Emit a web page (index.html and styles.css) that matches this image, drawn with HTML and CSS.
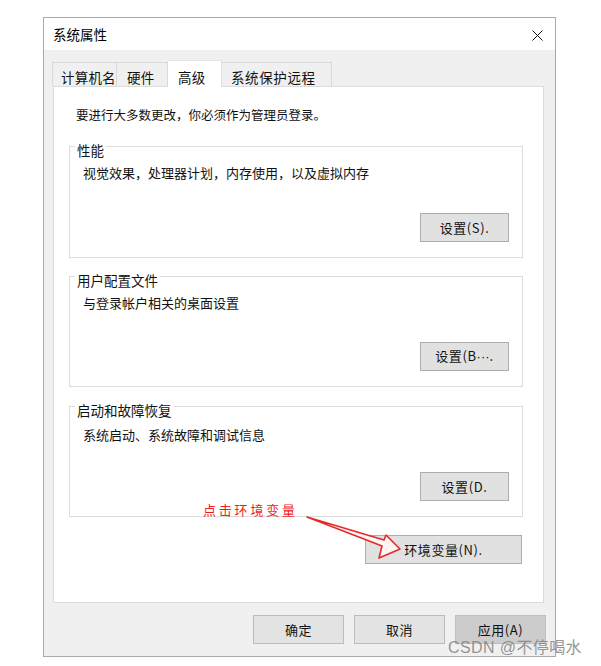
FILE: index.html
```html
<!DOCTYPE html>
<html lang="zh-CN">
<head>
<meta charset="utf-8">
<title>系统属性</title>
<link rel="stylesheet" href="styles.css">
</head>
<body>
<div class="stage">
  <div class="window">
    <div class="titlebar">
      <span class="title">系统属性</span>
      <span class="close">
        <svg width="11" height="11" viewBox="0 0 11 11"><path d="M0.5 0.5 L10.5 10.5 M10.5 0.5 L0.5 10.5" stroke="#111" stroke-width="1" fill="none"/></svg>
      </span>
    </div>
    <div class="body">
      <div class="tabs">
        <div class="tab t1">计算机名</div>
        <div class="tab t2">硬件</div>
        <div class="tab t3 active">高级</div>
        <div class="tab t4">系统保护远程</div>
      </div>
      <div class="panel">
        <p class="intro">要进行大多数更改，你必须作为管理员登录。</p>
        <section class="group g1">
          <div class="group-title">性能</div>
          <p class="group-desc">视觉效果，处理器计划，内存使用，以及虚拟内存</p>
          <div class="group-actions"><button class="btn btn-set">设置(S).</button></div>
        </section>
        <section class="group g2">
          <div class="group-title">用户配置文件</div>
          <p class="group-desc">与登录帐户相关的桌面设置</p>
          <div class="group-actions"><button class="btn btn-set">设置(B<span class="dots">···</span>.</button></div>
        </section>
        <section class="group g3">
          <div class="group-title">启动和故障恢复</div>
          <p class="group-desc">系统启动、系统故障和调试信息</p>
          <div class="group-actions"><button class="btn btn-set">设置(D.</button></div>
        </section>
        <div class="env-row"><button class="btn btn-env">环境变量(N).</button></div>
      </div>
      <div class="footer">
        <button class="btn btn-foot">确定</button>
        <button class="btn btn-foot">取消</button>
        <button class="btn btn-foot btn-apply">应用(A)</button>
      </div>
    </div>
  </div>
  <div class="annot">点击环境变量</div>
  <svg class="arrow" width="601" height="666" viewBox="0 0 601 666">
    <path d="M307 517 L384 540 L386 535 L400 549 L379 558 L382 546 Z" stroke="#e52a2a" stroke-width="1.6" fill="#fff4f4" stroke-linejoin="round"/>
  </svg>
  <div class="watermark">CSDN @不停喝水</div>
</div>
</body>
</html>
```

FILE: styles.css
```css
* { box-sizing: border-box; }

html, body {
  margin: 0;
  padding: 0;
  background: #ffffff;
}

body {
  font-family: "Noto Sans CJK SC", "Noto Sans", sans-serif;
  color: #111;
}

.stage {
  position: relative;
  width: 601px;
  height: 666px;
  padding: 17px 0 0 43px;
  overflow: hidden;
}

.window {
  width: 513px;
  height: 640px;
  border: 1px solid #a9a9a9;
  background: #f0f0f0;
  display: flex;
  flex-direction: column;
}

.titlebar {
  height: 32px;
  background: #ffffff;
  display: flex;
  align-items: center;
  justify-content: space-between;
  padding: 0 12px 0 9px;
}

.title {
  font-size: 13.5px;
  line-height: 16px;
  color: #000;
}

.close {
  display: flex;
  width: 11px;
  height: 11px;
  margin-top: 2px;
}

.body {
  flex: 1;
  padding-top: 10px;
}

.tabs {
  display: flex;
  align-items: flex-end;
  height: 26px;
  padding-left: 8px;
}

.tab {
  height: 24px;
  padding: 5px 0 0 8px;
  font-size: 13.5px;
  line-height: 18px;
  letter-spacing: 0.2px;
  border: 1px solid #dadada;
  border-bottom: none;
  border-left: none;
  background: #f0f0f0;
  color: #111;
  white-space: nowrap;
}

.t1 { width: 65px; border-left: 1px solid #dadada; }
.t2 { width: 51px; padding-left: 10px; }
.t3 { width: 54px; padding-left: 10px; }
.t4 { width: 110px; padding-left: 9px; letter-spacing: 0.6px; }

.tab.active {
  position: relative;
  height: 27px;
  margin-bottom: -1px;
  padding-top: 7px;
  background: #ffffff;
  border-color: #e2e2e2;
}

.panel {
  width: 491px;
  height: 517px;
  margin-left: 9px;
  background: #ffffff;
  border: 1px solid #dcdcdc;
}

.intro {
  margin: 20px 0 0 22px;
  font-size: 12.5px;
  line-height: 16px;
}

.group {
  width: 454px;
  margin: 23px 0 0 15px;
  border: 1px solid #dcdcdc;
  display: flex;
  flex-direction: column;
}

.g1 { height: 112px; }
.g2 { height: 111px; margin-top: 18px; }
.g3 { height: 111px; margin-top: 19px; }

.group-title {
  align-self: flex-start;
  margin: -4px 0 0 5px;
  padding: 0 2px;
  background: #ffffff;
  font-size: 13.5px;
  line-height: 14px;
}

.group-desc {
  margin: 8px 0 0 13px;
  font-size: 13px;
  line-height: 16px;
}

.g3 .group-desc { margin-top: 10px; }

.group-actions {
  margin-top: auto;
  display: flex;
  justify-content: flex-end;
  padding: 0 13px 15px 0;
}

.btn {
  font-family: "Noto Sans CJK SC", "Noto Sans", sans-serif;
  font-size: 13px;
  line-height: 16px;
  color: #111;
  background: #e1e1e1;
  border: 1px solid #adadad;
  height: 29px;
  padding: 0;
  letter-spacing: 0.6px;
  white-space: nowrap;
}

.dots {
  font-family: "Liberation Sans", sans-serif;
  letter-spacing: 0;
}

.btn-set { width: 89px; }

.env-row {
  width: 454px;
  margin: 18px 0 0 15px;
  padding-right: 1px;
  display: flex;
  justify-content: flex-end;
}

.btn-env { width: 157px; }

.footer {
  margin-top: 12px;
  display: flex;
  justify-content: flex-end;
  gap: 10px;
  padding-right: 9px;
}

.btn-foot {
  width: 91px;
  background: #e3e3e3;
  border-color: #bcbcbc;
}

.btn-apply {
  background: #cccccc;
  border-color: #bfbfbf;
}

.annot {
  position: absolute;
  left: 203px;
  top: 503px;
  font-size: 13px;
  line-height: 14px;
  letter-spacing: 2.8px;
  color: #f01c1c;
}

.arrow {
  position: absolute;
  left: 0;
  top: 0;
  pointer-events: none;
}

.watermark {
  position: absolute;
  left: 448px;
  top: 638px;
  font-family: "Liberation Sans", "Noto Sans CJK SC", sans-serif;
  font-size: 16px;
  line-height: 20px;
  letter-spacing: 0.4px;
  color: rgba(130, 130, 130, 0.85);
  white-space: nowrap;
}
```
